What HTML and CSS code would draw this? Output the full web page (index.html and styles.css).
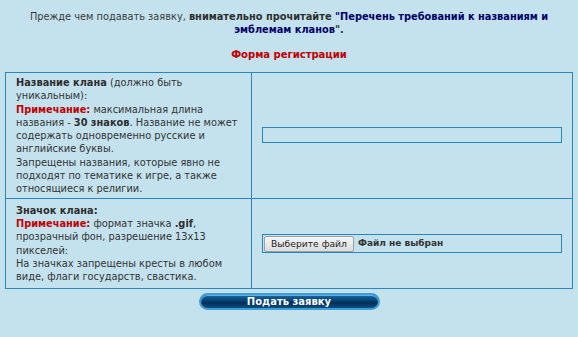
FILE: index.html
```html
<!DOCTYPE html>
<html lang="ru">
<head>
  <meta charset="UTF-8">
  <title>Регистрация клана</title>
  <link rel="stylesheet" href="styles.css">
</head>
<body>
  <!-- Вступление -->
  <p class="intro">
    Прежде чем подавать заявку, <b>внимательно прочитайте <a href="#">"Перечень требований к названиям и эмблемам кланов</a>".</b>
  </p>

  <h2 class="form-title">Форма регистрации</h2>

  <!-- Форма -->
  <form class="clan-form">
    <table class="form-table">
      <tr class="row-name">
        <td class="label-cell">
          <b>Название клана</b> (должно быть уникальным):<br>
          <b class="note">Примечание:</b> максимальная длина названия - <b>30 знаков</b>. Название не может содержать одновременно русские и английские буквы.<br>
          Запрещены названия, которые явно не подходят по тематике к игре, а также относящиеся к религии.
        </td>
        <td class="field-cell">
          <input class="text-field" type="text" name="clan_name">
        </td>
      </tr>
      <tr class="row-icon">
        <td class="label-cell">
          <b>Значок клана:</b><br>
          <b class="note">Примечание:</b> формат значка <b>.gif</b>, прозрачный фон, разрешение 13x13 пикселей:<br>
          На значках запрещены кресты в любом виде, флаги государств, свастика.
        </td>
        <td class="field-cell">
          <div class="file-field">
            <button type="button" class="file-btn">Выберите файл</button>
            <span class="file-name">Файл не выбран</span>
          </div>
        </td>
      </tr>
    </table>

    <div class="submit-row">
      <button type="submit" class="submit-btn">Подать заявку</button>
    </div>
  </form>
</body>
</html>
```

FILE: styles.css
```css
/* Базовые настройки */
* {
  box-sizing: border-box;
}
body {
  margin: 0;
  background: #c4e2ee;
  color: #3a3a3a;
  font-family: 'DejaVu Sans', Verdana, sans-serif;
  font-size: 9.8px;
  line-height: 13.3px;
}
a {
  color: #000066;
  text-decoration: none;
}
b {
  color: #2e2e2e;
}

/* Вступление и заголовок */
.intro {
  margin: 10px 0 0;
  text-align: center;
  padding: 0 20px;
}
.intro a {
  color: #000066;
}
.form-title {
  margin: 11px 0 0;
  height: 13.4px;
  text-align: center;
  font-size: 10px;
  color: #c00000;
}

/* Таблица формы */
.form-table {
  margin: 11px 0 0 5px;
  width: 568px;
  border-collapse: collapse;
}
.form-table td {
  border: 1px solid #2a86c0;
  vertical-align: middle;
}
.label-cell {
  width: 246px;
  padding: 3px 4px 2px 10px;
  color: #333;
}
.row-icon .label-cell {
  padding: 5px 4px 5px 10px;
}
.row-name {
  height: 125px;
}
.row-icon {
  height: 86px;
}
.note {
  color: #c00000;
}
.field-cell {
  padding: 0 10px;
}

/* Поля ввода */
.text-field {
  display: block;
  width: 300px;
  height: 16px;
  margin: 0;
  border: 1px solid #2a86c0;
  background: #c4e2ee;
  padding: 0 3px;
  font: inherit;
}
.file-field {
  display: flex;
  align-items: center;
  gap: 4px;
  width: 300px;
  height: 19px;
  border: 1px solid #2a86c0;
  padding: 0 1px;
}
.file-btn {
  height: 16px;
  width: 90px;
  padding: 0;
  border: 1px solid #a0a0a0;
  border-radius: 2px;
  background: linear-gradient(#f6f6f6, #dddddd);
  color: #222;
  font: 9.2px 'DejaVu Sans', Verdana, sans-serif;
  line-height: 14px;
}
.file-name {
  font-weight: bold;
  font-size: 9px;
  color: #333;
}

/* Кнопка отправки */
.submit-row {
  display: flex;
  justify-content: center;
  margin-top: 4px;
}
.submit-btn {
  width: 181px;
  height: 17px;
  padding: 0;
  border: 2px solid #3f9ed6;
  border-radius: 9px;
  background: linear-gradient(#1a6aa2 0%, #03406f 45%, #022f55 60%, #0a4e82 100%);
  box-shadow: inset 0 1px 0 #5db3e6;
  color: #fff;
  font: bold 10px 'DejaVu Sans', Verdana, sans-serif;
  line-height: 13px;
}
```
